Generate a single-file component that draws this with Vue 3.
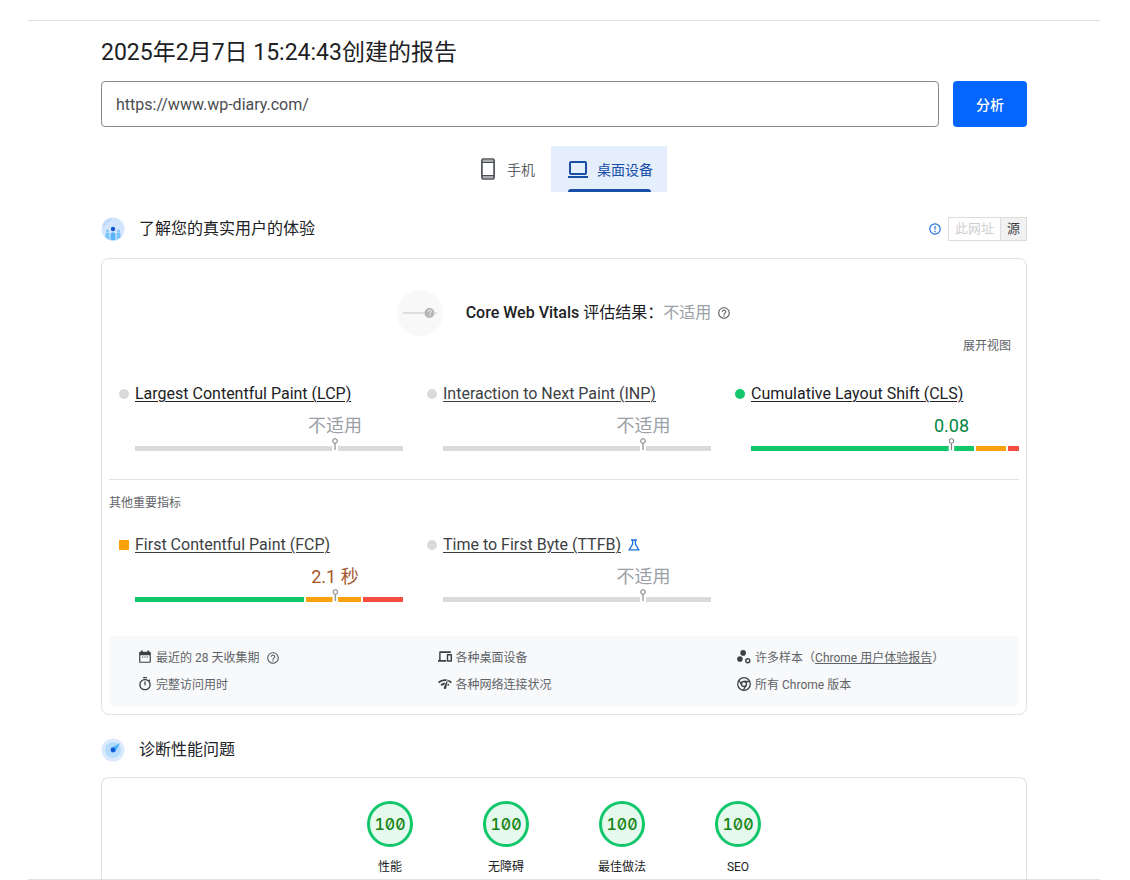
<script setup>
import { ref } from 'vue'

const url = ref('https://www.wp-diary.com/')

const coreMetrics = [
  { name: 'Largest Contentful Paint (LCP)', state: 'none', value: '不适用', bands: [{ tone: 'none', size: 268 }], pin: 74.6 },
  { name: 'Interaction to Next Paint (INP)', state: 'none', value: '不适用', soft: true, bands: [{ tone: 'none', size: 268 }], pin: 74.8 },
  {
    name: 'Cumulative Layout Shift (CLS)', state: 'good', value: '0.08', pin: 74.8,
    bands: [{ tone: 'good', size: 223 }, { tone: 'mid', size: 30 }, { tone: 'bad', size: 11 }],
  },
]

const otherMetrics = [
  {
    name: 'First Contentful Paint (FCP)', state: 'mid', value: '2.1 秒', soft: true, pin: 74.6,
    bands: [{ tone: 'good', size: 169 }, { tone: 'mid', size: 55 }, { tone: 'bad', size: 40 }],
  },
  { name: 'Time to First Byte (TTFB)', state: 'none', value: '不适用', soft: true, lab: true, bands: [{ tone: 'none', size: 268 }], pin: 74.8 },
]

const groups = [
  { id: 'core', items: coreMetrics },
  { id: 'other', title: '其他重要指标', items: otherMetrics },
]

const scores = [
  { label: '性能', value: 100 },
  { label: '无障碍', value: 100 },
  { label: '最佳做法', value: 100 },
  { label: 'SEO', value: 100 },
]
</script>

<template>
  <main class="frame">
    <h1 class="title">2025年2月7日 15:24:43创建的报告</h1>

    <form class="search" @submit.prevent>
      <input v-model="url" class="url" type="text" aria-label="网址" />
      <button class="analyze" type="submit">分析</button>
    </form>

    <div class="tabs" role="tablist">
      <button class="tab" type="button" role="tab" aria-selected="false">
        <svg class="tab-icon" viewBox="0 0 22 22" fill="none" stroke="#4d5156">
          <rect x="4.900" y="1" width="12.200" height="20" rx="1.500" stroke-width="1.700" />
          <path d="M5 4.200h12M5 17.800h12" stroke-width="1.500" />
          <path d="M6 2.700h10M6 19.300h10" stroke="#a9acb0" stroke-width="1.400" />
        </svg>
        <span>手机</span>
      </button>
      <button class="tab active" type="button" role="tab" aria-selected="true">
        <svg class="tab-icon" viewBox="0 0 22 22" fill="none" stroke="#174ea6" stroke-width="2">
          <rect x="3" y="4" width="16" height="12" rx="1" />
          <path d="M1 19h20" />
        </svg>
        <span>桌面设备</span>
      </button>
    </div>

    <header class="section-head">
      <svg class="badge" viewBox="0 0 24 24">
        <circle cx="12" cy="12" r="11.500" fill="#d2e5fc" />
        <path d="M2 7a11.500 11.500 0 0 1 9-6.300c0 3-2 4-4 5s-2 4-5 4z" fill="#bedafb" />
        <path d="M4.500 20.500v-4c0-1.500 4-1.500 4 0v6.500zM19.500 20.500v-4c0-1.500-4-1.500-4 0v6.500z" fill="#79c6fb" />
        <path d="M9.700 23.300V17c0-2 4.600-2 4.600 0v6.300z" fill="#55b4f8" />
        <circle cx="6.500" cy="13.800" r="1.400" fill="#79c6fb" />
        <circle cx="17.500" cy="13.800" r="1.400" fill="#79c6fb" />
        <circle cx="12" cy="12" r="2.200" fill="#1257d6" />
      </svg>
      <h2>了解您的真实用户的体验</h2>
      <svg class="notice" viewBox="0 0 12 12" fill="none" stroke="#1a6fe0" stroke-width="1.200">
        <circle cx="6" cy="6" r="5.200" />
        <path d="M6 3v3.600M6 7.800v1.400" />
      </svg>
      <div class="scope">
        <button type="button" disabled>此网址</button>
        <button class="chosen" type="button">源</button>
      </div>
    </header>

    <section class="card field">
      <div class="verdict">
        <svg class="verdict-art" viewBox="0 0 46 46">
          <circle cx="23" cy="23" r="23" fill="#f8f8f8" />
          <path d="M6 23h22M38 23h2" stroke="#c4c4c4" stroke-width="1.200" />
          <circle cx="32.500" cy="23" r="5" fill="#b5b5b5" />
          <path d="M31 21.700c0-2 3.200-2 3.200 0 0 1.200-1.600 1.200-1.600 2.300M32.600 25v1" fill="none" stroke="#fff" stroke-width="1" />
        </svg>
        <p class="verdict-text"><b>Core Web Vitals</b> 评估结果：<span>不适用</span></p>
        <svg class="help" viewBox="0 0 24 24" fill="#5f6368">
          <path d="M11 18h2v-2h-2v2zm1-16C6.480 2 2 6.480 2 12s4.480 10 10 10 10-4.480 10-10S17.520 2 12 2zm0 18c-4.410 0-8-3.590-8-8s3.590-8 8-8 8 3.590 8 8-3.590 8-8 8zm0-14c-2.210 0-4 1.790-4 4h2c0-1.100.9-2 2-2s2 .9 2 2c0 2-3 1.750-3 5h2c0-2.250 3-2.500 3-5 0-2.210-1.790-4-4-4z" />
        </svg>
      </div>
      <div class="expand-row"><button type="button" class="expand">展开视图</button></div>

      <div v-for="group in groups" :key="group.id" :class="['group', group.id]">
        <h3 v-if="group.title">{{ group.title }}</h3>
        <div class="metrics">
          <article v-for="m in group.items" :key="m.name" class="metric">
            <div class="metric-name">
              <i :class="['mark', m.state]"></i>
              <a href="#" :class="{ soft: m.soft }">{{ m.name }}</a>
              <svg v-if="m.lab" class="flask" viewBox="0 0 12 12" fill="none" stroke="#1a6fe0" stroke-width="1.300">
                <path d="M3 1h6M4.600 1v4L1.200 10.800h9.600L7.400 5V1" />
              </svg>
            </div>
            <div class="distribution">
              <div class="bar">
                <span v-for="b in m.bands" :key="b.tone" :class="['band', b.tone]" :style="{ flexGrow: b.size }"></span>
              </div>
              <div class="marker" :style="{ left: m.pin + '%' }">
                <span :class="['value', m.state]">{{ m.value }}</span>
                <svg class="pin" viewBox="0 0 6 13">
                  <path d="M0 8h6v5H0z" fill="#fff" />
                  <circle cx="3" cy="3" r="2.300" fill="#fff" stroke="#70757a" />
                  <path d="M3 5.500V12" stroke="#70757a" />
                </svg>
              </div>
            </div>
          </article>
        </div>
      </div>

      <ul class="facts">
        <li>
          <svg viewBox="0 0 24 24" fill="#3c4043"><path d="M20 3h-1V1h-3v2H8V1H5v2H4c-1.100 0-2 .9-2 2v15c0 1.100.9 2 2 2h16c1.100 0 2-.9 2-2V5c0-1.100-.9-2-2-2zm0 17H4V9h16zM7 11h2v2H7zm4 0h2v2h-2zm4 0h2v2h-2z" /></svg>
          <span>最近的 28 天收集期</span>
          <svg class="hint" viewBox="0 0 24 24" fill="#5f6368"><path d="M11 18h2v-2h-2v2zm1-16C6.480 2 2 6.480 2 12s4.480 10 10 10 10-4.480 10-10S17.520 2 12 2zm0 18c-4.410 0-8-3.590-8-8s3.590-8 8-8 8 3.590 8 8-3.590 8-8 8zm0-14c-2.210 0-4 1.790-4 4h2c0-1.100.9-2 2-2s2 .9 2 2c0 2-3 1.750-3 5h2c0-2.250 3-2.500 3-5 0-2.210-1.790-4-4-4z" /></svg>
        </li>
        <li>
          <svg viewBox="0 0 24 24" fill="#3c4043"><path d="M4 5h18V2H4c-1.100 0-2 .9-2 2v13H0v3h14v-3H4.500V5zm19 2h-7c-.55 0-1 .45-1 1v11c0 .55.45 1 1 1h7c.55 0 1-.45 1-1V8c0-.55-.45-1-1-1zm-1.500 10.500h-4v-8h4v8z" /></svg>
          <span>各种桌面设备</span>
        </li>
        <li>
          <svg viewBox="0 0 24 24" fill="#3c4043"><circle cx="10.500" cy="5" r="4.800" /><circle cx="5" cy="15.500" r="4.800" /><circle cx="18.500" cy="18.500" r="3.400" fill="none" stroke="#3c4043" stroke-width="2.400" /></svg>
          <span>许多样本（<a href="#">Chrome 用户体验报告</a>）</span>
        </li>
        <li>
          <svg viewBox="1 1 22 22" fill="#3c4043"><path d="M15 1H9v2h6V1zm-4 13h2V8h-2v6zm8.030-6.610 1.420-1.420c-.43-.51-.9-.99-1.410-1.410l-1.420 1.420C16.070 4.740 14.120 4 12 4c-4.970 0-9 4.030-9 9s4.020 9 9 9 9-4.030 9-9c0-2.120-.74-4.070-1.970-5.610zM12 20c-3.870 0-7-3.130-7-7s3.130-7 7-7 7 3.130 7 7-3.130 7-7 7z" /></svg>
          <span>完整访问用时</span>
        </li>
        <li>
          <svg viewBox="1 1 22 22" fill="#3c4043"><path d="M15.900 5c-.17 0-.32.090-.41.230l-.070.150-5.180 11.650c-.16.290-.26.610-.26.960 0 1.110.9 2.010 2.010 2.010.96 0 1.770-.68 1.960-1.590l.010-.030L16.400 5.500c0-.28-.22-.5-.5-.5zM1 9l2 2c2.880-2.880 6.790-4.080 10.530-3.620l1.190-2.680C9.890 3.840 4.740 5.270 1 9zm20 2 2-2c-1.640-1.640-3.550-2.820-5.590-3.570l-.53 2.820c1.500.62 2.900 1.530 4.120 2.750zm-4 4 2-2c-.8-.8-1.700-1.420-2.660-1.890l-.55 2.920c.42.270.83.590 1.210.97zM5 13l2 2c1.130-1.130 2.560-1.790 4.030-2l1.280-2.880c-2.630-.080-5.300.870-7.310 2.880z" /></svg>
          <span>各种网络连接状况</span>
        </li>
        <li>
          <svg viewBox="0 0 24 24" fill="none" stroke="#3c4043" stroke-width="2.200"><circle cx="12" cy="12" r="10.800" /><circle cx="12" cy="12" r="4.300" /><path d="M12 7.700h9.500M8.300 14.200 3.400 5.900M15.700 14.200 11 22.300" /></svg>
          <span>所有 Chrome 版本</span>
        </li>
      </ul>
    </section>

    <header class="section-head second">
      <svg class="badge" viewBox="0 0 24 24">
        <circle cx="12" cy="12" r="11.500" fill="#dbe9fd" />
        <circle cx="12" cy="12" r="8" fill="#b5dcfd" />
        <path d="M19 5 14.300 14 10 10z" fill="#4fb2fa" />
        <circle cx="12" cy="12" r="2.400" fill="#1257d6" />
      </svg>
      <h2>诊断性能问题</h2>
    </header>

    <section class="card scores">
      <a v-for="s in scores" :key="s.label" href="#" class="score">
        <span class="dial">{{ s.value }}</span>
        <span class="score-label">{{ s.label }}</span>
      </a>
    </section>
  </main>
</template>

<style>
body {
  margin: 0;
  background: #fff;
}
</style>

<style scoped>
.frame {
  margin: 20px 30px 0 28px;
  padding: 17px 73px 0;
  border-top: 1px solid #dfe1e3;
  border-bottom: 1px solid #dfe1e3;
  color: #202124;
  font-family: Roboto, "Noto Sans CJK SC", sans-serif;
  font-size: 12px;
}
button,
input {
  font: inherit;
}
button {
  cursor: pointer;
}
a {
  color: inherit;
}
svg {
  flex: none;
}
h1,
h2,
h3,
p,
ul {
  margin: 0;
  padding: 0;
  font-weight: 400;
}
.title {
  font-size: 23px;
  line-height: 30px;
}
.search {
  display: flex;
  gap: 14px;
  height: 46px;
  margin-top: 13px;
}
.url {
  flex: 1;
  min-width: 0;
  box-sizing: border-box;
  padding: 0 14px;
  border: 1px solid #85888c;
  border-radius: 4px;
  background: #fff;
  color: #4a4c50;
  font-size: 16px;
}
.analyze {
  width: 74px;
  padding: 0;
  border: 0;
  border-radius: 4px;
  background: #0566ff;
  color: #fff;
  font-size: 14px;
  font-weight: 500;
}
.tabs {
  display: flex;
  justify-content: center;
  margin-top: 19px;
}
.tab {
  position: relative;
  display: flex;
  align-items: center;
  gap: 8px;
  height: 46px;
  padding: 0 16px;
  border: 0;
  background: none;
  color: #5f6368;
  font-size: 14px;
}
.tab-icon {
  width: 22px;
  height: 22px;
}
.tab.active {
  padding-right: 14px;
  background: #e4eefc;
  color: #174ea6;
}
.tab.active::after {
  content: "";
  position: absolute;
  right: 16px;
  bottom: 0;
  left: 17px;
  height: 3px;
  border-radius: 3px 3px 0 0;
  background: #174ea6;
}
.section-head {
  display: flex;
  align-items: center;
  height: 24px;
  margin: 25px 0 17px;
}
.section-head.second {
  margin: 23px 0 15px;
}
.badge {
  width: 24px;
  height: 24px;
  margin-right: 14px;
}
.section-head h2 {
  flex: 1;
  font-size: 16px;
  line-height: 24px;
}
.notice {
  width: 12px;
  height: 12px;
  margin-right: 7px;
}
.scope {
  display: flex;
}
.scope button {
  height: 24px;
  padding: 0 6px;
  border: 1px solid #dcdcdc;
  background: #fff;
  color: #cfcfcf;
  font-size: 13px;
  line-height: 22px;
}
.scope .chosen {
  border-left: 0;
  background: #f1f1f1;
  color: #3c4043;
}
.card {
  border: 1px solid #dfe1e3;
  border-radius: 8px;
}
.field {
  padding: 31px 7px 8px;
}
.verdict {
  display: flex;
  align-items: center;
  justify-content: center;
  height: 46px;
}
.verdict-art {
  width: 46px;
  height: 46px;
  margin-right: 23px;
}
.verdict-text {
  font-size: 16px;
  line-height: 24px;
}
.verdict-text b {
  font-weight: 500;
}
.verdict-text span {
  color: #9aa0a6;
}
.help {
  width: 14px;
  height: 14px;
  margin-left: 6px;
}
.expand-row {
  display: flex;
  justify-content: flex-end;
  margin-top: 1px;
  padding-right: 8px;
}
.expand {
  padding: 0;
  border: 0;
  background: none;
  color: #5f6368;
  line-height: 18px;
}
.group.core {
  margin-top: 27px;
  padding-bottom: 28px;
  border-bottom: 1px solid #dfe1e3;
}
.group.other {
  padding: 14px 0 34px;
}
.group h3 {
  margin-bottom: 21px;
  color: #5f6368;
  font-size: 12px;
  line-height: 18px;
}
.metrics {
  display: grid;
  grid-template-columns: repeat(3, 1fr);
  gap: 24px;
  padding-left: 10px;
}
.metric-name {
  display: flex;
  align-items: center;
  font-size: 16px;
  line-height: 24px;
}
.metric-name a {
  text-underline-offset: 2px;
  text-decoration-thickness: 1px;
}
.metric-name a.soft {
  color: #3c4043;
}
.mark {
  width: 10px;
  height: 10px;
  margin-right: 6px;
  border-radius: 50%;
}
.mark.mid {
  border-radius: 0;
}
.flask {
  width: 12px;
  height: 12px;
  margin-left: 7px;
}
.distribution {
  position: relative;
  display: flex;
  align-items: flex-end;
  height: 45px;
  margin-left: 16px;
}
.bar {
  display: flex;
  flex: 1;
  gap: 2px;
  height: 5px;
}
.band {
  flex-basis: 0;
}
.mark.none,
.band.none {
  background: #dadada;
}
.mark.good,
.band.good {
  background: #12c76a;
}
.mark.mid,
.band.mid {
  background: #fba10b;
}
.band.bad {
  background: #f94d43;
}
.marker {
  position: absolute;
  bottom: 0;
  display: flex;
  flex-direction: column;
  align-items: center;
  transform: translateX(-50%);
}
.value {
  font-size: 18px;
  line-height: 25px;
  white-space: nowrap;
}
.value.none {
  color: #9aa0a6;
}
.value.good {
  color: #018642;
}
.value.mid {
  color: #a5562c;
}
.pin {
  width: 6px;
  height: 13px;
}
.facts {
  display: grid;
  grid-template-columns: 34fr 34fr 32fr;
  row-gap: 7px;
  padding: 12px 0 11px 29px;
  border-radius: 4px;
  background: #f8f9fa;
  color: #5f6368;
  line-height: 20px;
  list-style: none;
}
.facts li {
  display: flex;
  align-items: center;
  gap: 4px;
}
.facts svg {
  width: 14px;
  height: 14px;
  margin-bottom: 2px;
}
.facts .hint {
  margin: 0 0 0 3px;
}
.scores {
  display: flex;
  justify-content: center;
  padding: 23px 0 3px;
  border-bottom: 0;
  border-radius: 8px 8px 0 0;
}
.score {
  display: flex;
  flex-direction: column;
  align-items: center;
  gap: 11px;
  width: 116px;
  text-decoration: none;
}
.dial {
  display: flex;
  align-items: center;
  justify-content: center;
  box-sizing: border-box;
  width: 46px;
  height: 46px;
  border: 3px solid #12c76a;
  border-radius: 50%;
  background: #e6f9ee;
  color: #148414;
  font-family: Inter, "DejaVu Sans Mono", monospace;
  font-feature-settings: "zero" 1, "tnum" 1;
  font-size: 16px;
  font-weight: 500;
}
.score-label {
  line-height: 18px;
}
</style>
